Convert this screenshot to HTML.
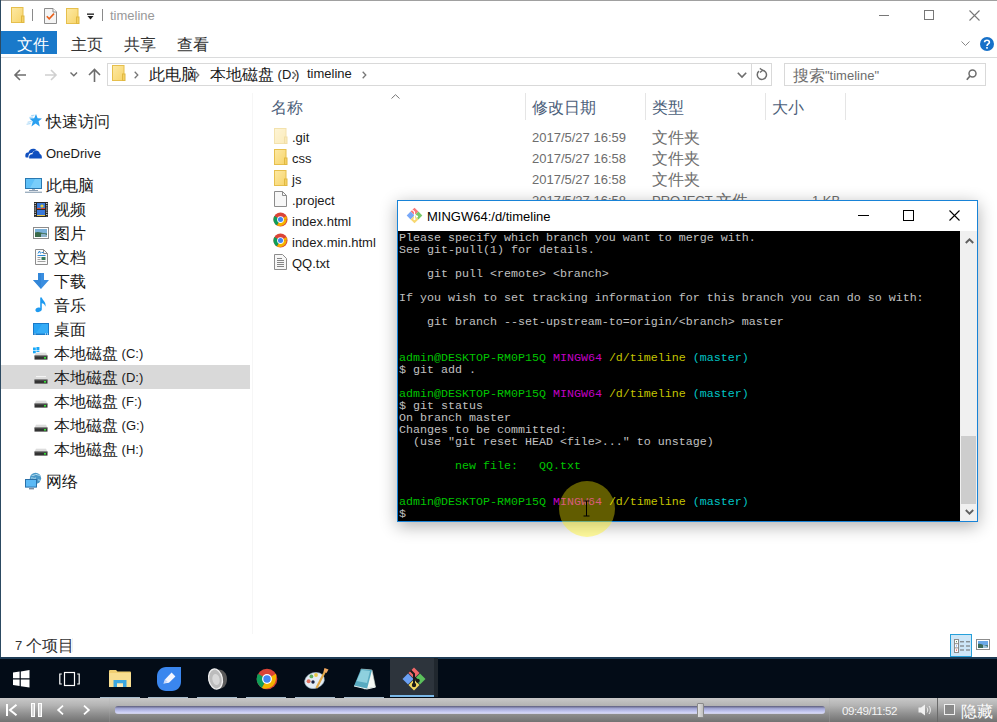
<!DOCTYPE html>
<html><head><meta charset="utf-8">
<style>
*{margin:0;padding:0;box-sizing:border-box}
html,body{width:997px;height:722px;overflow:hidden;background:#fff}
body{position:relative;font-family:"Liberation Sans",sans-serif;font-size:13px;color:#000}
.a{position:absolute}
svg.a{overflow:visible}
.t{position:absolute;white-space:nowrap;line-height:14px;margin-top:1.5px}
.term{position:absolute;left:399px;top:232px;font-family:"Liberation Mono",monospace;font-size:11.67px;line-height:12px;color:#c0c0c0;white-space:pre}
.g{color:#00c400}.m{color:#c400c4}.y{color:#c4c400}.c{color:#00c4c4}
.nv{position:absolute;white-space:nowrap;line-height:14px;margin-top:1.5px;color:#1a1a1a}
.fn{position:absolute;white-space:nowrap;line-height:14px;margin-top:1.5px;color:#1a1a1a;left:292px}
.fd{position:absolute;white-space:nowrap;line-height:14px;margin-top:1.5px;color:#6d6d6d;left:532px}
.ft{position:absolute;white-space:nowrap;line-height:14px;margin-top:1.5px;color:#6d6d6d;left:652px}
.cj{font-size:16px;vertical-align:-1px}
</style></head><body>
<svg width="0" height="0" style="position:absolute">
<defs>
<linearGradient id="fg" x1="0" y1="0" x2="1" y2="1"><stop offset="0" stop-color="#fde9a4"/><stop offset="1" stop-color="#f7d46a"/></linearGradient>
<symbol id="folder" viewBox="0 0 14 16"><rect x="0.5" y="0.5" width="11.5" height="15" fill="url(#fg)" stroke="#e6bf4c"/><rect x="10.5" y="9" width="2.5" height="6.5" fill="#f4d064" stroke="#e0b840"/></symbol>
<symbol id="chrome" viewBox="0 0 16 16"><circle cx="8" cy="8" r="7.5" fill="#db4437"/><path d="M8 8 L1.5 4.25 A7.5 7.5 0 0 0 4.25 14.5 Z" fill="#0f9d58"/><path d="M8 8 L4.25 14.5 A7.5 7.5 0 0 0 14.5 8 Z" fill="#f4b400"/><path d="M8 8 L14.5 8 A7.5 7.5 0 0 0 14.5 4.25 Z" fill="#f4b400"/><circle cx="8" cy="8" r="3.6" fill="#fff"/><circle cx="8" cy="8" r="2.7" fill="#4285f4"/></symbol>
<symbol id="drive" viewBox="0 0 14 8"><path d="M0.5 4 L2 0.5 H12 L13.5 4 Z" fill="#dcdcdc"/><path d="M2 0.5 H12" stroke="#f4f4f4" stroke-width="1"/><rect x="0.5" y="3.6" width="13" height="4" fill="#333"/><rect x="0.5" y="3.6" width="13" height="0.8" fill="#6a6a6a"/><rect x="10" y="5" width="2" height="1.6" fill="#34e034"/></symbol>
</defs></svg>
<!-- window frame -->
<div class="a" style="left:0;top:0;width:997px;height:1px;background:#a0a0a0"></div>
<div class="a" style="left:0;top:0;width:1px;height:657px;background:#2c4a62"></div>

<!-- title bar -->
<svg class="a" style="left:11px;top:7px" width="14" height="17"><use href="#folder" width="14" height="16"/></svg>
<div class="a" style="left:32px;top:9px;width:1px;height:12px;background:#8a8a8a"></div>
<svg class="a" style="left:44px;top:8px" width="13" height="16" viewBox="0 0 13 16"><path d="M0.5 0.5 H9 L12.5 4 V15.5 H0.5 Z" fill="#f4f4f4" stroke="#8c8c8c"/><path d="M9 0.5 V4 H12.5" fill="#fff" stroke="#8c8c8c"/><path d="M2.8 8.2 L5.2 10.8 L10 5.6" fill="none" stroke="#e8601c" stroke-width="1.6"/></svg>
<svg class="a" style="left:66px;top:8px" width="14" height="17"><use href="#folder" width="14" height="16"/></svg>
<svg class="a" style="left:87px;top:13px" width="8" height="8" viewBox="0 0 8 8"><rect x="0" y="0.5" width="7" height="1.3" fill="#1a1a1a"/><path d="M0.5 3 H6.5 L3.5 6.5 Z" fill="#1a1a1a"/></svg>
<div class="a" style="left:102px;top:9px;width:1px;height:12px;background:#8a8a8a"></div>
<div class="t" style="left:110px;top:7px;color:#999">timeline</div>
<!-- window controls -->
<div class="a" style="left:879px;top:15px;width:10px;height:1px;background:#777"></div>
<div class="a" style="left:924px;top:10px;width:10px;height:10px;border:1px solid #777"></div>
<svg class="a" style="left:969px;top:10px" width="11" height="11" viewBox="0 0 11 11"><path d="M0.5 0.5 L10.5 10.5 M10.5 0.5 L0.5 10.5" stroke="#777" stroke-width="1.1"/></svg>

<!-- ribbon tabs -->
<div class="a" style="left:1px;top:31px;width:56px;height:23px;background:#1979ca"></div>
<div class="t" style="left:17px;top:36px;color:#fff"><span class="cj">文件</span></div>
<div class="t" style="left:71px;top:36px;color:#333"><span class="cj">主页</span></div>
<div class="t" style="left:124px;top:36px;color:#333"><span class="cj">共享</span></div>
<div class="t" style="left:177px;top:36px;color:#333"><span class="cj">查看</span></div>
<svg class="a" style="left:961px;top:41px" width="9" height="6" viewBox="0 0 9 6"><path d="M0.5 0.5 L4.5 4.5 L8.5 0.5" fill="none" stroke="#888" stroke-width="1"/></svg>
<svg class="a" style="left:980px;top:37px" width="15" height="15" viewBox="0 0 15 15"><circle cx="7" cy="7" r="7" fill="#1670c8"/><path d="M4.6 5.2 C4.6 2.6 9.4 2.6 9.4 5.2 C9.4 7 7 7 7 9" fill="none" stroke="#fff" stroke-width="1.6"/><rect x="6.2" y="10" width="1.6" height="1.7" fill="#fff"/></svg>
<div class="a" style="left:1px;top:57px;width:996px;height:1px;background:#dadbdc"></div>

<!-- address row -->
<svg class="a" style="left:14px;top:69px" width="13" height="12" viewBox="0 0 13 12"><path d="M12 6 H1.5 M6 1 L1 6 L6 11" fill="none" stroke="#6d6d6d" stroke-width="1.6"/></svg>
<svg class="a" style="left:44px;top:69px" width="13" height="12" viewBox="0 0 13 12"><path d="M1 6 H11.5 M7 1 L12 6 L7 11" fill="none" stroke="#d0d0d0" stroke-width="1.6"/></svg>
<svg class="a" style="left:70px;top:72px" width="8" height="5" viewBox="0 0 8 5"><path d="M0.5 0.5 L3.8 3.8 L7 0.5" fill="none" stroke="#6d6d6d" stroke-width="1.4"/></svg>
<svg class="a" style="left:88px;top:68px" width="13" height="14" viewBox="0 0 13 14"><path d="M6.5 14 V1.5 M1 7 L6.5 1.5 L12 7" fill="none" stroke="#6d6d6d" stroke-width="1.6"/></svg>
<div class="a" style="left:107px;top:63px;width:645px;height:23px;border:1px solid #d9d9d9"></div>
<div class="a" style="left:751px;top:63px;width:21px;height:23px;border:1px solid #d9d9d9"></div>
<div class="a" style="left:784px;top:63px;width:202px;height:23px;border:1px solid #d9d9d9"></div>
<svg class="a" style="left:112px;top:65px" width="14" height="17"><use href="#folder" width="14" height="16"/></svg>
<svg class="a" style="left:134px;top:71px" width="5" height="8" viewBox="0 0 5 8"><path d="M0.7 0.7 L3.8 4 L0.7 7.3" fill="none" stroke="#777" stroke-width="1.3"/></svg>
<div class="t" style="left:149px;top:66px;color:#1a1a1a"><span class="cj">此电脑</span></div>
<svg class="a" style="left:195px;top:71px" width="5" height="8" viewBox="0 0 5 8"><path d="M0.7 0.7 L3.8 4 L0.7 7.3" fill="none" stroke="#777" stroke-width="1.3"/></svg>
<div class="t" style="left:210px;top:66px;color:#1a1a1a"><span class="cj">本地磁盘</span> (D:)</div>
<svg class="a" style="left:292px;top:71px" width="5" height="8" viewBox="0 0 5 8"><path d="M0.7 0.7 L3.8 4 L0.7 7.3" fill="none" stroke="#777" stroke-width="1.3"/></svg>
<div class="t" style="left:307px;top:65px;color:#1a1a1a">timeline</div>
<svg class="a" style="left:362px;top:71px" width="5" height="8" viewBox="0 0 5 8"><path d="M0.7 0.7 L3.8 4 L0.7 7.3" fill="none" stroke="#777" stroke-width="1.3"/></svg>
<svg class="a" style="left:737px;top:72px" width="10" height="6" viewBox="0 0 10 6"><path d="M0.8 0.8 L5 5 L9.2 0.8" fill="none" stroke="#6d6d6d" stroke-width="1.6"/></svg>
<svg class="a" style="left:756px;top:68px" width="12" height="13" viewBox="0 0 12 13"><path d="M3 3.2 A4.6 4.6 0 1 0 6 2.2" fill="none" stroke="#6d6d6d" stroke-width="1.5"/><path d="M3.8 0.4 L6.6 2.3 L4 4.6" fill="none" stroke="#6d6d6d" stroke-width="1.3"/></svg>
<div class="t" style="left:793px;top:67px;color:#6d6d6d"><span class="cj">搜索</span>"timeline"</div>
<svg class="a" style="left:966px;top:69px" width="11" height="12" viewBox="0 0 11 12"><circle cx="6.5" cy="4.5" r="3.5" fill="none" stroke="#6d6d6d" stroke-width="1.5"/><path d="M4 7 L0.8 10.8" stroke="#6d6d6d" stroke-width="1.7"/></svg>
<!-- nav pane -->
<div class="a" style="left:1px;top:365px;width:249px;height:24px;background:#d9d9d9"></div>
<div class="a" style="left:252px;top:93px;width:1px;height:541px;background:#f6f6f6"></div>
<svg class="a" style="left:26px;top:114px" width="16" height="14" viewBox="0 0 16 14"><path d="M10 0 L11.6 4.3 L16 4.4 L12.6 7.3 L13.8 12.4 L9.6 9.6 L5.4 12.6 L6.8 7.6 L3.4 4.6 L8.2 4.2 Z" fill="#2aa0f0"/><path d="M5.2 1.6 L8.4 1.2 M3.4 3.4 L7.2 3 M1.6 8.2 L5.6 7.6 M0.6 10.2 L4.6 9.6" stroke="#8ccaf4" stroke-width="0.8"/></svg>
<div class="nv" style="left:46px;top:113px"><span class="cj">快速访问</span></div>
<svg class="a" style="left:25px;top:148px" width="17" height="11" viewBox="0 0 17 11"><path d="M0.4 8.8 C-0.2 5.6 1.6 4.2 3.4 4.6 C4.2 0.6 9 -0.6 11.6 2.2 C9.4 2.4 7.6 3.6 7 5.2 C5.2 4.8 3.4 6 3.4 8.4 V9.4 H0.8 Z" fill="#0f4fbf"/><path d="M4.2 10.6 C3.6 7.6 5.2 5.8 7.4 6.2 C8 2.6 11.4 1.6 13.6 3.4 C14.4 4.2 14.8 5.2 14.8 6 C16.4 6.2 17.2 8.2 16.8 10.6 Z" fill="#0f4fbf"/></svg>
<div class="nv" style="left:46px;top:145px">OneDrive</div>
<svg class="a" style="left:25px;top:178px" width="17" height="15" viewBox="0 0 17 15"><rect x="0.5" y="0.5" width="16" height="10" fill="#5ec0f8" stroke="#2a78b0"/><path d="M10 1 H16 V10 H5 Z" fill="#7ed0fa" opacity="0.8"/><rect x="7" y="11" width="3" height="1" fill="#a8b4c0"/><rect x="4" y="12" width="9" height="1" fill="#8a9cb0"/><rect x="0" y="13.6" width="17" height="1.4" fill="#9eb0c0"/></svg>
<div class="nv" style="left:46px;top:177px"><span class="cj">此电脑</span></div>
<svg class="a" style="left:34px;top:202px" width="14" height="15" viewBox="0 0 14 15"><rect x="0" y="0" width="14" height="15" fill="#2a2a2a"/><rect x="3" y="1" width="8" height="6" fill="#3a78d8"/><rect x="3" y="8" width="8" height="6" fill="#3a78d8"/><circle cx="8" cy="4" r="1.6" fill="#e8d040"/><path d="M3 6 H6 V7 H3 Z M7 6 H11 V7 H7 Z" fill="#e04a30"/><path d="M3 13 H11 V14 H3 Z" fill="#e8c040"/><path d="M1.2 1 V14.5 M12.8 1 V14.5" stroke="#eee" stroke-dasharray="1 1.2" stroke-width="1.2"/></svg>
<div class="nv" style="left:54px;top:201px"><span class="cj">视频</span></div>
<svg class="a" style="left:33px;top:227px" width="16" height="12" viewBox="0 0 16 12"><rect x="0.5" y="0.5" width="15" height="11" fill="#fff" stroke="#8c8c8c"/><rect x="2" y="2" width="12" height="8" fill="#7ab0d8"/><path d="M2 5.5 C5 4 9 6 14 6.5 V10 H2 Z" fill="#3a6a4a"/><path d="M8 7 C10 6.5 12 7 14 8 V10 H8 Z" fill="#8ab0c8"/></svg>
<div class="nv" style="left:54px;top:225px"><span class="cj">图片</span></div>
<svg class="a" style="left:35px;top:249px" width="13" height="16" viewBox="0 0 13 16"><path d="M0.5 0.5 H8.5 L12.5 4.5 V15.5 H0.5 Z" fill="#fafafa" stroke="#8c8c8c"/><path d="M8.5 0.5 V4.5 H12.5" fill="none" stroke="#8c8c8c"/><path d="M3 4.5 L4.5 2 L5.5 4.5 M6.5 3.5 H8.5 M2.5 6.5 H10.5" stroke="#2a8ad8" stroke-width="1" fill="none"/><path d="M2.5 8.5 H5.5 M2.5 10.5 H5.5 M2.5 12.5 H10.5" stroke="#8a8a8a" stroke-width="0.8"/><rect x="6.5" y="8" width="4" height="3" fill="#3a7a5a"/></svg>
<div class="nv" style="left:54px;top:249px"><span class="cj">文档</span></div>
<svg class="a" style="left:33px;top:273px" width="16" height="16" viewBox="0 0 16 16"><path d="M5 0 H11 V7 H16 L8 16 L0 7 H5 Z" fill="#3a8ee0"/><path d="M5 0 H8 V16 L0 7 H5 Z" fill="#2a7ed0" opacity="0.5"/></svg>
<div class="nv" style="left:54px;top:273px"><span class="cj">下载</span></div>
<svg class="a" style="left:35px;top:297px" width="12" height="16" viewBox="0 0 12 16"><path d="M5.2 0.4 H6.8 C7.4 3.6 11.6 4.8 10.4 9.8 C10 7.6 8.6 6.4 6.8 6.2 V12.6 C6.8 15.2 0.6 16.4 0.4 13.2 C0.4 10.8 3.6 10 5.2 11 Z" fill="#1e9af0"/></svg>
<div class="nv" style="left:54px;top:297px"><span class="cj">音乐</span></div>
<svg class="a" style="left:33px;top:323px" width="16" height="12" viewBox="0 0 16 12"><rect x="0" y="0" width="16" height="12" fill="#1a7ac8"/><rect x="1" y="1" width="14" height="9.5" fill="#28a4f4"/><path d="M9 1 H15 V10.5 H3 Z" fill="#40b4f8" opacity="0.6"/><path d="M1.5 11 H2.5 M12 11 H13 M14 11 H15" stroke="#fff" stroke-width="1"/></svg>
<div class="nv" style="left:54px;top:321px"><span class="cj">桌面</span></div>
<svg class="a" style="left:33px;top:347px" width="7" height="7" viewBox="0 0 7 7"><rect x="0" y="0.5" width="2.8" height="2.6" fill="#1aa8f8"/><rect x="3.4" y="0" width="3" height="3.1" fill="#1aa8f8"/><rect x="0" y="3.7" width="2.8" height="2.6" fill="#1aa8f8"/><rect x="3.4" y="3.7" width="3" height="3.1" fill="#1aa8f8"/></svg>
<svg class="a" style="left:34px;top:352px" width="14" height="8"><use href="#drive" width="14" height="8"/></svg>
<div class="nv" style="left:54px;top:345px"><span class="cj">本地磁盘</span> (C:)</div>
<svg class="a" style="left:34px;top:376px" width="14" height="8"><use href="#drive" width="14" height="8"/></svg>
<div class="nv" style="left:54px;top:369px"><span class="cj">本地磁盘</span> (D:)</div>
<svg class="a" style="left:34px;top:400px" width="14" height="8"><use href="#drive" width="14" height="8"/></svg>
<div class="nv" style="left:54px;top:393px"><span class="cj">本地磁盘</span> (F:)</div>
<svg class="a" style="left:34px;top:424px" width="14" height="8"><use href="#drive" width="14" height="8"/></svg>
<div class="nv" style="left:54px;top:417px"><span class="cj">本地磁盘</span> (G:)</div>
<svg class="a" style="left:34px;top:448px" width="14" height="8"><use href="#drive" width="14" height="8"/></svg>
<div class="nv" style="left:54px;top:441px"><span class="cj">本地磁盘</span> (H:)</div>
<svg class="a" style="left:25px;top:472px" width="17" height="18" viewBox="0 0 17 18"><circle cx="10.5" cy="6.3" r="5.6" fill="#4a98c8"/><path d="M6.5 3 C8 4.5 10 2 12 2.5 C13 3.5 14 2.8 15.5 4 M6 6 C8 5.5 9 7 11 6 M13 8 C14.5 7.5 15 9 16 8.5" stroke="#b8e0f0" stroke-width="1" fill="none"/><rect x="0.5" y="7.5" width="11" height="7.6" fill="#5cbaf6" stroke="#2a70a8"/><rect x="4" y="16" width="5" height="1.4" fill="#7a8ca0"/></svg>
<div class="nv" style="left:46px;top:473px"><span class="cj">网络</span></div>
<!-- headers -->
<div class="t" style="left:271px;top:99px;color:#4c607a"><span class="cj">名称</span></div>
<svg class="a" style="left:391px;top:94px" width="9" height="5" viewBox="0 0 9 5"><path d="M0.5 4.5 L4.5 0.7 L8.5 4.5" fill="none" stroke="#777" stroke-width="1"/></svg>
<div class="t" style="left:532px;top:99px;color:#4c607a"><span class="cj">修改日期</span></div>
<div class="t" style="left:652px;top:99px;color:#4c607a"><span class="cj">类型</span></div>
<div class="t" style="left:772px;top:99px;color:#4c607a"><span class="cj">大小</span></div>
<div class="a" style="left:525px;top:93px;width:1px;height:27px;background:#e5e5e5"></div>
<div class="a" style="left:645px;top:93px;width:1px;height:27px;background:#e5e5e5"></div>
<div class="a" style="left:765px;top:93px;width:1px;height:27px;background:#e5e5e5"></div>
<div class="a" style="left:845px;top:93px;width:1px;height:27px;background:#e5e5e5"></div>

<!-- files -->
<svg class="a" style="left:274px;top:128px;opacity:.45" width="14" height="16"><use href="#folder" width="14" height="16"/></svg>
<div class="fn" style="top:129px">.git</div>
<div class="fd" style="top:129px">2017/5/27 16:59</div>
<div class="ft" style="top:129px"><span class="cj">文件夹</span></div>
<svg class="a" style="left:274px;top:149px" width="14" height="16"><use href="#folder" width="14" height="16"/></svg>
<div class="fn" style="top:150px">css</div>
<div class="fd" style="top:150px">2017/5/27 16:58</div>
<div class="ft" style="top:150px"><span class="cj">文件夹</span></div>
<svg class="a" style="left:274px;top:170px" width="14" height="16"><use href="#folder" width="14" height="16"/></svg>
<div class="fn" style="top:171px">js</div>
<div class="fd" style="top:171px">2017/5/27 16:58</div>
<div class="ft" style="top:171px"><span class="cj">文件夹</span></div>
<svg class="a" style="left:274px;top:191px" width="13" height="16" viewBox="0 0 13 16"><path d="M0.5 0.5 H8.5 L12.5 4.5 V15.5 H0.5 Z" fill="#f7f7f7" stroke="#8c8c8c"/><path d="M8.5 0.5 V4.5 H12.5" fill="none" stroke="#8c8c8c"/></svg>
<div class="fn" style="top:192px">.project</div>
<div class="fd" style="top:192px">2017/5/27 16:58</div>
<div class="ft" style="top:192px">PROJECT <span class="cj">文件</span></div>
<div class="t" style="left:812px;top:192px;color:#6d6d6d">1 KB</div>
<svg class="a" style="left:273px;top:212px" width="15" height="15"><use href="#chrome" width="15" height="15"/></svg>
<div class="fn" style="top:213px">index.html</div>
<svg class="a" style="left:273px;top:233px" width="15" height="15"><use href="#chrome" width="15" height="15"/></svg>
<div class="fn" style="top:234px">index.min.html</div>
<svg class="a" style="left:274px;top:254px" width="13" height="16" viewBox="0 0 13 16"><path d="M0.5 0.5 H8.5 L12.5 4.5 V15.5 H0.5 Z" fill="#f7f7f7" stroke="#8c8c8c"/><path d="M3 4.5 H8 M3 6.5 H10 M3 8.5 H10 M3 10.5 H10 M3 12.5 H10" stroke="#777" stroke-width="0.9"/></svg>
<div class="fn" style="top:255px">QQ.txt</div>

<!-- status bar -->
<div class="t" style="left:15px;top:637px;color:#333">7 <span class="cj">个项目</span></div>
<div class="a" style="left:72px;top:638px;width:1px;height:14px;background:#f0f0f0"></div>
<div class="a" style="left:950px;top:634px;width:22px;height:23px;background:#cde6f7;border:1px solid #26a0da"></div>
<svg class="a" style="left:954px;top:639px" width="17" height="14" viewBox="0 0 17 14"><rect x="0.5" y="0.5" width="4" height="13" fill="#fff" stroke="#8c8c8c"/><path d="M0.5 4.7 H4.5 M0.5 8.9 H4.5" stroke="#8c8c8c"/><rect x="2" y="2.2" width="1" height="1" fill="#3a7a4a"/><rect x="2" y="6.4" width="1" height="1" fill="#4a8af8"/><rect x="2" y="10.6" width="1" height="1" fill="#e02020"/><path d="M6 2.8 H10 M12 2.8 H16 M6 7 H10 M12 7 H16 M6 11 H10 M12 11 H16" stroke="#6a6a6a" stroke-width="1"/></svg>
<svg class="a" style="left:976px;top:639px" width="14" height="11" viewBox="0 0 14 11"><rect x="0.5" y="0.5" width="13" height="10" fill="#fff" stroke="#8c8c8c"/><rect x="2" y="2" width="10" height="7" fill="#6aa8e8"/><path d="M2 5 C4 4 6 5.5 8 6 C10 6.5 11 6 12 6.5 V9 H2 Z" fill="#3a6a5a"/><path d="M7 6 C9 6 10.5 7 12 8 V9 H7 Z" fill="#9ac0d8"/></svg>

<!-- taskbar -->
<div class="a" style="left:0;top:657px;width:997px;height:2px;background:#1e3c56"></div>
<div class="a" style="left:0;top:659px;width:997px;height:39px;background:#030c17"></div>
<div class="a" style="left:390px;top:658px;width:44px;height:39px;background:#2d343c"></div>
<div class="a" style="left:434px;top:658px;width:4px;height:39px;background:#20272e"></div>
<div class="a" style="left:390px;top:695px;width:44px;height:2px;background:#7ab8e8"></div>
<div class="a" style="left:100px;top:697px;width:40px;height:1px;background:#a8bccc"></div>
<div class="a" style="left:148px;top:697px;width:40px;height:1px;background:#a8bccc"></div>
<div class="a" style="left:197px;top:697px;width:40px;height:1px;background:#a8bccc"></div>
<div class="a" style="left:246px;top:697px;width:40px;height:1px;background:#a8bccc"></div>
<div class="a" style="left:295px;top:697px;width:40px;height:1px;background:#a8bccc"></div>
<div class="a" style="left:344px;top:697px;width:40px;height:1px;background:#a8bccc"></div>
<svg class="a" style="left:13px;top:670px" width="17" height="18" viewBox="0 0 17 18"><path d="M0 2.6 L6.6 1.6 V8.2 H0 Z M7.8 1.4 L16.5 0 V8.2 H7.8 Z M0 9.4 H6.6 V16 L0 15 Z M7.8 9.4 H16.5 V17.4 L7.8 16.2 Z" fill="#fff"/></svg>
<svg class="a" style="left:59px;top:672px" width="21" height="14" viewBox="0 0 21 14"><rect x="5.5" y="0.5" width="10" height="13" fill="none" stroke="#fff" stroke-width="1.2"/><path d="M2.8 2 H0.8 V12 H2.8 M18.2 2 H20.2 V12 H18.2" fill="none" stroke="#fff" stroke-width="1.2"/></svg>
<svg class="a" style="left:109px;top:670px" width="22" height="17" viewBox="0 0 22 17"><path d="M0 1 Q0 0 1 0 H7 L8.5 1.5 H21 Q22 1.5 22 2.5 V17 H0 Z" fill="#f0cf72"/><rect x="0" y="3" width="22" height="14" fill="#f8de90"/><path d="M4.5 10 H17.5 V17 H14 V13.5 H8 V17 H4.5 Z" fill="#3aa6e0"/><rect x="8" y="13.5" width="6" height="3.5" fill="#f8e8b8"/></svg>
<svg class="a" style="left:157px;top:667px" width="24" height="24" viewBox="0 0 24 24"><path d="M9 0 H24 V15 C24 20 20 24 15 24 H9 C4 24 0 20 0 15 V9 C0 4 4 0 9 0 Z" fill="#3a86ee"/><path d="M6.5 16.5 L8.2 12.2 L14.6 5.6 L18.4 9.4 L12 15.8 Z" fill="#f4f6ff"/><path d="M6.5 16.5 L8.2 12.2 L10.8 14.9 Z" fill="#c8d8f8"/></svg>
<svg class="a" style="left:208px;top:668px" width="20" height="22" viewBox="0 0 20 22"><path d="M8 2 C12 0 19 3 19 11 C19 19 13 22 9 20 Z" fill="#5a5a5a"/><ellipse cx="7.5" cy="11" rx="6.8" ry="10.2" transform="rotate(-12 7.5 11)" fill="#bcbcbc" stroke="#f0f0f0" stroke-width="1.3"/><ellipse cx="8" cy="11.5" rx="3.6" ry="5.6" transform="rotate(-12 8 11.5)" fill="#d8d8d8"/></svg>
<svg class="a" style="left:256px;top:668px" width="22" height="22"><use href="#chrome" width="22" height="22"/></svg>
<svg class="a" style="left:304px;top:667px" width="25" height="24" viewBox="0 0 25 24"><ellipse cx="10.5" cy="13.5" rx="10" ry="7.8" transform="rotate(-18 10.5 13.5)" fill="#e4edf4" stroke="#a8c0d0" stroke-width="0.6"/><circle cx="4.6" cy="14.2" r="2" fill="#e07060"/><circle cx="7.4" cy="9.4" r="1.9" fill="#60b060"/><circle cx="12" cy="8" r="1.9" fill="#e8c848"/><circle cx="9" cy="15" r="1.7" fill="#1a2040"/><path d="M21.5 3.5 L12.5 21" stroke="#e0a848" stroke-width="2.2"/><path d="M20.5 1 L24.5 2.5 L22.5 6 L19.5 4.5 Z" fill="#f0a860"/></svg>
<svg class="a" style="left:352px;top:668px" width="24" height="22" viewBox="0 0 24 22"><path d="M9 1 L20 2 L23.5 19 L12 21 Z" fill="#f4f8f4" stroke="#c8d4c8" stroke-width="0.6"/><path d="M9 1 L20 2 L15 21 L2 18 Z" fill="#58aac0"/><path d="M9.5 2 L18 3 L15 15 L4.5 13 Z" fill="#a0dce8" opacity="0.75"/><path d="M2 18 L15 21 L23.5 19" fill="none" stroke="#e8f0f0" stroke-width="1"/></svg>
<svg class="a" style="left:402px;top:667px" width="24" height="24" viewBox="0 0 24 24"><path d="M12 0.5 L17.5 6 L12 11.5 L6.5 6 Z" fill="#f06868"/><path d="M0.5 12 L6 6.5 L11.5 12 L6 17.5 Z" fill="#6aa0f4"/><path d="M23.5 12 L18 6.5 L12.5 12 L18 17.5 Z" fill="#5cc05c"/><path d="M12 23.5 L6.5 18 L12 12.5 L17.5 18 Z" fill="#f4d860"/><path d="M8.5 3.5 L12 7 V18 M12 10 L15.5 13.5" stroke="#1a1a1a" stroke-width="2" fill="none"/><circle cx="12" cy="18" r="2.2" fill="#1a1a1a"/><circle cx="15.8" cy="13.8" r="2" fill="#1a1a1a"/></svg>

<!-- player bar -->
<div class="a" style="left:0;top:698px;width:997px;height:24px;background:linear-gradient(#c8c8c8,#b4b4b4 30%,#8c8c8c 70%,#727272)"></div>
<div class="a" style="left:109px;top:698px;width:1px;height:24px;background:#b0b0b0;opacity:.2"></div>
<div class="a" style="left:829px;top:698px;width:1px;height:24px;background:#a8a8a8;opacity:.3"></div>
<div class="a" style="left:937px;top:698px;width:1px;height:24px;background:#6a6a6a"></div>
<svg class="a" style="left:6px;top:704px" width="12" height="12" viewBox="0 0 12 12"><rect x="0" y="0" width="2" height="12" fill="#fff"/><path d="M10.5 0.7 L4 6 L10.5 11.3" fill="none" stroke="#fff" stroke-width="2"/></svg>
<div class="a" style="left:31px;top:703px;width:4px;height:14px;border:1px solid #fff;background:#d8d8d8"></div>
<div class="a" style="left:38px;top:703px;width:4px;height:14px;border:1px solid #fff;background:#d8d8d8"></div>
<svg class="a" style="left:57px;top:705px" width="7" height="10" viewBox="0 0 7 10"><path d="M6 0.7 L1.2 5 L6 9.3" fill="none" stroke="#fff" stroke-width="1.8"/></svg>
<svg class="a" style="left:83px;top:705px" width="7" height="10" viewBox="0 0 7 10"><path d="M1 0.7 L5.8 5 L1 9.3" fill="none" stroke="#fff" stroke-width="1.8"/></svg>
<div class="a" style="left:115px;top:706px;width:710px;height:8px;border-radius:3px;background:linear-gradient(#5c5c7a,#9ea2d0 30%,#bcc0ec 60%,#d8dafa 90%,#c0c0d0)"></div>
<div class="a" style="left:697px;top:703px;width:7px;height:15px;border-radius:1px;background:linear-gradient(90deg,#e0e0e0,#c0c0c0);border:1px solid #8a8a8a"></div>
<div class="t" style="left:842px;top:702px;color:#f4f4f4;font-size:11.6px;letter-spacing:-0.5px">09:49/11:52</div>
<svg class="a" style="left:918px;top:704px" width="14" height="12" viewBox="0 0 14 12"><path d="M0.5 3.5 H3 L7 0.5 V11.5 L3 8.5 H0.5 Z" fill="#f0f0f0"/><path d="M9 3.5 C10 5 10 7 9 8.5 M11 2 C12.8 4 12.8 8 11 10" fill="none" stroke="#f0f0f0" stroke-width="1"/></svg>
<div class="a" style="left:944px;top:704px;width:11px;height:11px;border:1px solid #f0f0f0;background:#8a8a8a"></div>
<div class="t" style="left:961px;top:703px;color:#fff"><span class="cj">隐藏</span></div>
<!-- terminal window -->
<div class="a" style="left:397px;top:200px;width:581px;height:322px;border:1px solid #1883d7;background:#fff;box-shadow:0 4px 16px rgba(0,0,0,.32)"></div>
<div class="a" style="left:398px;top:231px;width:562px;height:290px;background:#000"></div>
<div class="a" style="left:960px;top:231px;width:17px;height:290px;background:#f0f0f0"></div>
<div class="a" style="left:961px;top:436px;width:15px;height:68px;background:#cdcdcd"></div>
<svg class="a" style="left:965px;top:238px" width="9" height="6" viewBox="0 0 9 6"><path d="M0.8 5 L4.5 1.3 L8.2 5" fill="none" stroke="#606060" stroke-width="2"/></svg>
<svg class="a" style="left:965px;top:509px" width="9" height="6" viewBox="0 0 9 6"><path d="M0.8 1 L4.5 4.7 L8.2 1" fill="none" stroke="#606060" stroke-width="1.8"/></svg>
<svg class="a" style="left:406px;top:207px" width="17" height="17" viewBox="0 0 24 24"><path d="M12 1 L6.5 6.5 L12 12 L17.5 6.5 Z" fill="#f87878"/><path d="M1 12 L6.5 6.5 L12 12 L6.5 17.5 Z" fill="#78a8f8"/><path d="M23 12 L17.5 6.5 L12 12 L17.5 17.5 Z" fill="#78c868"/><path d="M12 23 L6.5 17.5 L12 12 L17.5 17.5 Z" fill="#f8d870"/><path d="M9 4 L12 7 V17 M12 10 L15 13" stroke="#fff" stroke-width="1.6" fill="none"/><circle cx="12" cy="17" r="1.6" fill="#fff"/><circle cx="15.5" cy="13.5" r="1.6" fill="#fff"/></svg>
<div class="t" style="left:427px;top:208px;color:#000">MINGW64:/d/timeline</div>
<div class="a" style="left:858px;top:215px;width:11px;height:1px;background:#000"></div>
<div class="a" style="left:903px;top:210px;width:11px;height:11px;border:1px solid #000"></div>
<svg class="a" style="left:949px;top:210px" width="11" height="11" viewBox="0 0 11 11"><path d="M0.5 0.5 L10.5 10.5 M10.5 0.5 L0.5 10.5" stroke="#000" stroke-width="1.1"/></svg>
<div class="term">Please specify which branch you want to merge with.
See git-pull(1) for details.

    git pull &lt;remote&gt; &lt;branch&gt;

If you wish to set tracking information for this branch you can do so with:

    git branch --set-upstream-to=origin/&lt;branch&gt; master


<span class="g">admin@DESKTOP-RM0P15Q</span> <span class="m">MINGW64</span> <span class="y">/d/timeline</span> <span class="c">(master)</span>
$ git add .

<span class="g">admin@DESKTOP-RM0P15Q</span> <span class="m">MINGW64</span> <span class="y">/d/timeline</span> <span class="c">(master)</span>
$ git status
On branch master
Changes to be committed:
  (use "git reset HEAD &lt;file&gt;..." to unstage)

        <span class="g">new file:   QQ.txt</span>


<span class="g">admin@DESKTOP-RM0P15Q</span> <span class="m">MINGW64</span> <span class="y">/d/timeline</span> <span class="c">(master)</span>
$</div>
<!-- cursor highlight -->
<div class="a" style="left:559px;top:481px;width:56px;height:56px;border-radius:50%;background:rgba(255,242,0,.38)"></div>
<svg class="a" style="left:582px;top:500px" width="9" height="17" viewBox="0 0 9 17"><path d="M1.5 1 H7.5 M4.5 1 V16 M1.5 16 H7.5" stroke="#000" stroke-width="1"/></svg>
</body></html>
